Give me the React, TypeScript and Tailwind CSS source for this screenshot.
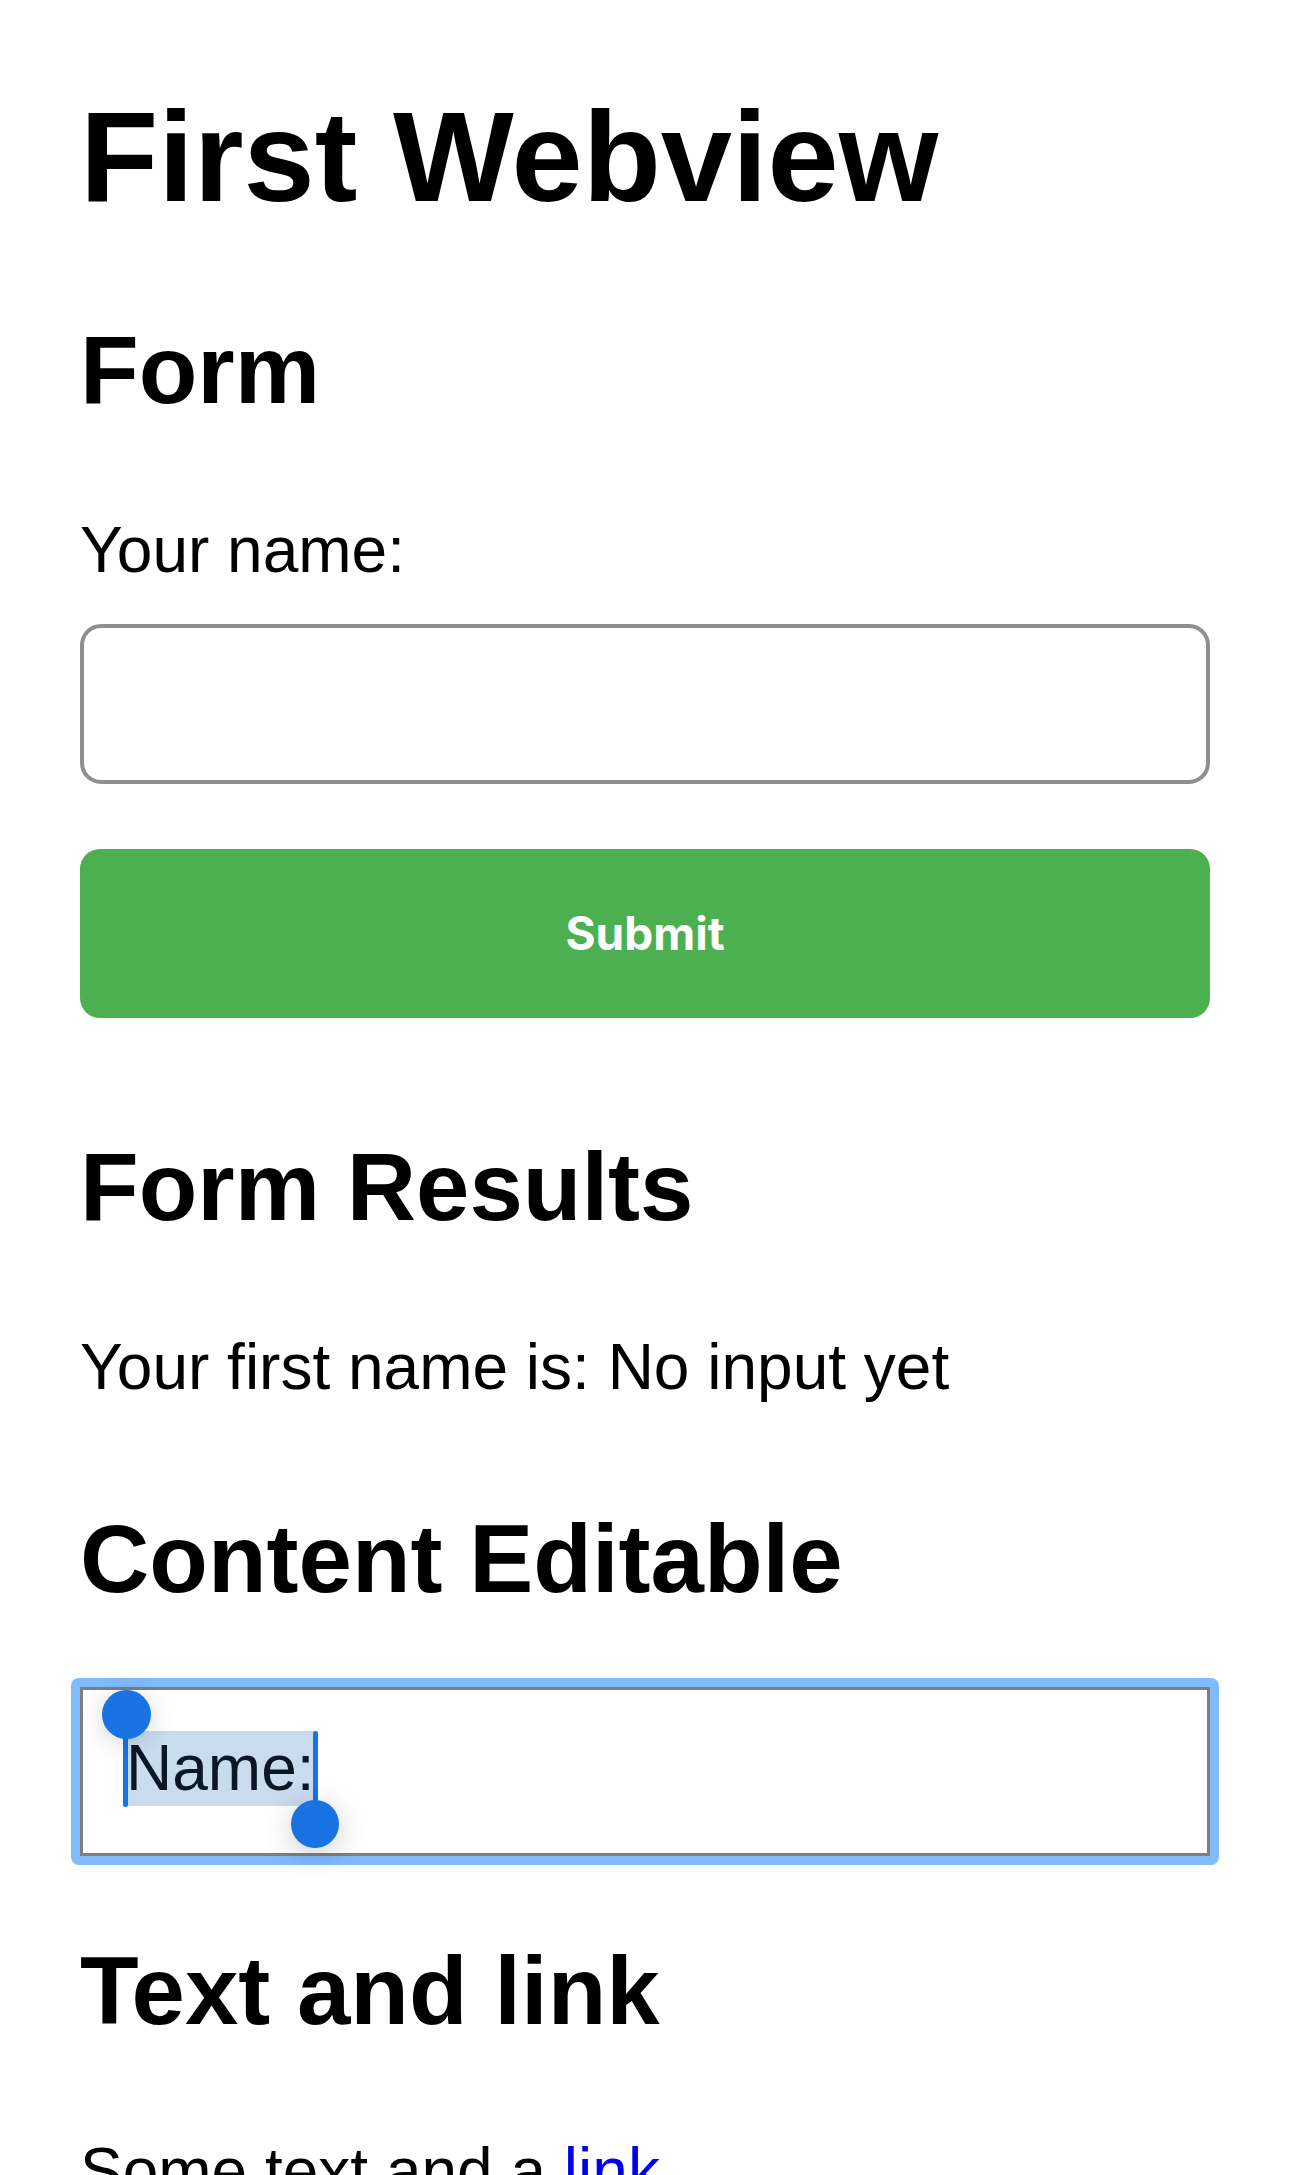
export default function App() {
  return (
    <div className="min-h-screen bg-white px-[80px] pt-[93px] font-['Liberation_Sans',Arial,sans-serif] text-black">
      <h1 className="text-[128px] font-bold leading-none">First Webview</h1>

      {/* form */}
      <h2 className="mt-[101px] text-[96px] font-bold leading-none">Form</h2>
      <form onSubmit={(e) => e.preventDefault()}>
        <label className="mt-[100px] block text-[64px] leading-none">Your name:</label>
        <input
          type="text"
          className="mt-[42px] block h-[160px] w-full rounded-[21px] border-4 border-[#8e8e93] bg-white"
        />
        <button
          type="submit"
          className="mt-[65px] flex h-[169px] w-full items-center justify-center rounded-[20px] bg-[#4caf50] font-['Inter',sans-serif] text-[46px] font-bold text-white"
        >
          Submit
        </button>
      </form>

      <h2 className="mt-[121px] text-[96px] font-bold leading-none">Form Results</h2>
      <p className="mt-[100px] text-[64px] leading-none">Your first name is: No input yet</p>

      {/* content editable, focused with selection */}
      <h2 className="mt-[112px] text-[96px] font-bold leading-none">Content Editable</h2>
      <div className="-mx-[9px] mt-[71px] rounded-[8px] bg-[#80bbfd] p-[9px]">
        <div className="border-[3px] border-[#7f7f7f] bg-white pb-[47px] pl-[43px] pt-[41px] text-[64px] leading-none">
          <span className="relative inline-block bg-[#c9dbee] align-top leading-[75px] text-[#0b1626]">
            Name:
            <span className="absolute -bottom-[1px] -left-[3px] top-0 w-[5px] rounded-full bg-[#1a73e3]" />
            <span className="absolute -left-[24px] -top-[41px] h-[49px] w-[49px] rounded-full bg-[#1a73e3] shadow-[0_4px_26px_rgba(0,0,0,0.16)]" />
            <span className="absolute -right-[3px] top-0 h-[87px] w-[5px] rounded-full bg-[#1a73e3]" />
            <span className="absolute -right-[24px] top-[69px] h-[48px] w-[48px] rounded-full bg-[#1a73e3] shadow-[0_6px_30px_rgba(0,0,0,0.2)]" />
          </span>
        </div>
      </div>

      <h2 className="mt-[78px] text-[96px] font-bold leading-none">Text and link</h2>
      <p className="mt-[100px] text-[64px] leading-none">
        Some text and a <a href="#" className="text-[#0000ee]">link</a>
      </p>
    </div>
  );
}
